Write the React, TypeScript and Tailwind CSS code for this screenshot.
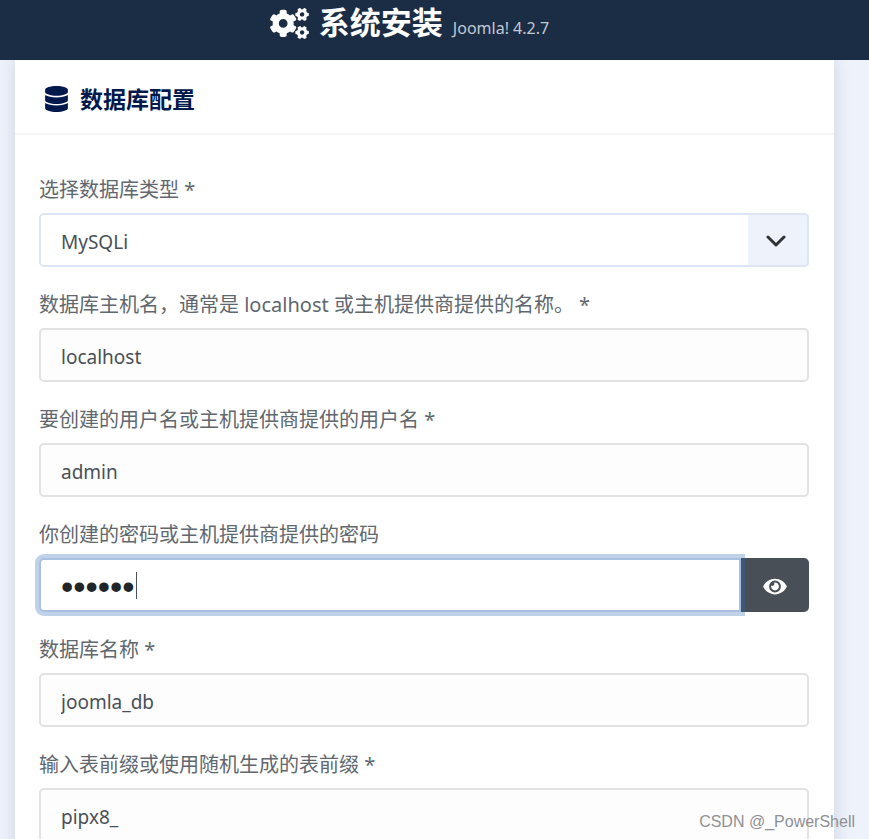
import { useState } from 'react'
import type { InputHTMLAttributes, ReactNode } from 'react'
import { FaCogs, FaDatabase, FaEye, FaEyeSlash } from 'react-icons/fa'

const controlClass =
  'block w-full h-[54px] rounded-[5px] border-2 px-5 pt-1 text-[19px] leading-7 text-[#495057] outline-none'

interface FieldProps {
  id: string
  label: string
  children: ReactNode
}

function Field({ id, label, children }: FieldProps) {
  return (
    <div>
      <label htmlFor={id} className="block mb-2 text-[20px] leading-[30px] text-[#60676e]">
        {label}
      </label>
      {children}
    </div>
  )
}

function TextInput(props: InputHTMLAttributes<HTMLInputElement>) {
  return (
    <input
      type="text"
      className={`${controlClass} border-[#e2e2e2] bg-[#fdfdfd] focus:border-[#a9c0e2]`}
      {...props}
    />
  )
}

export default function App() {
  const [dbType, setDbType] = useState('mysqli')
  const [password, setPassword] = useState('joomla')
  const [showPassword, setShowPassword] = useState(false)

  return (
    <div className="relative h-screen overflow-hidden bg-[#eef2fb] font-['Noto_Sans','Noto_Sans_CJK_SC',sans-serif]">
      <header className="relative z-10 flex h-[60px] justify-center bg-[#1b2c45] pr-[50px] text-white">
        <h1 className="flex h-[50px] items-center gap-[10px] text-[31px] font-bold leading-[50px]">
          <FaCogs className="h-[31px] w-[39px] -mt-1" />
          <span className="flex items-baseline gap-[10px]">
            系统安装
            <small className="text-[16px] font-normal text-[#c3c9d2]">Joomla! 4.2.7</small>
          </span>
        </h1>
      </header>

      <main className="pl-[15px] pr-[35px]">
        <form className="bg-white pb-10 shadow-[0_0_16px_rgba(30,45,80,0.16)]">
          <div className="flex h-[75px] items-center gap-3 border-b-2 border-[#f5f5f5] px-[30px] pt-1 text-[#00194c]">
            <FaDatabase className="h-[26px] w-[23px]" />
            <h2 className="text-[23px] font-bold leading-8">数据库配置</h2>
          </div>

          <div className="flex flex-col gap-[23px] pl-6 pr-[25px] pt-10">
            <Field id="db-type" label="选择数据库类型 *">
              <div className="relative">
                <select
                  id="db-type"
                  value={dbType}
                  onChange={(e) => setDbType(e.target.value)}
                  className={`${controlClass} appearance-none border-[#dbe5f3] bg-white`}
                >
                  <option value="mysqli">MySQLi</option>
                  <option value="mysql">MySQL (PDO)</option>
                  <option value="pgsql">PostgreSQL (PDO)</option>
                </select>
                <span className="pointer-events-none absolute inset-y-0 right-0 flex w-[61px] items-center justify-center rounded-r-[5px] border-2 border-l-0 border-[#dbe5f3] bg-[#eef3fb] pr-1 pt-0.5">
                  <svg viewBox="0 0 20 14" className="h-[14px] w-5" fill="none">
                    <path
                      d="M2 3l8 8 8-8"
                      stroke="#303336"
                      strokeWidth="3"
                      strokeLinecap="round"
                      strokeLinejoin="round"
                    />
                  </svg>
                </span>
              </div>
            </Field>

            <Field id="db-host" label="数据库主机名，通常是 localhost 或主机提供商提供的名称。 *">
              <TextInput id="db-host" defaultValue="localhost" />
            </Field>

            <Field id="db-user" label="要创建的用户名或主机提供商提供的用户名 *">
              <TextInput id="db-user" defaultValue="admin" />
            </Field>

            <Field id="db-pass" label="你创建的密码或主机提供商提供的密码">
              <div className="flex">
                <div className="relative z-10 flex-1">
                  <input
                    id="db-pass"
                    type={showPassword ? 'text' : 'password'}
                    value={password}
                    onChange={(e) => setPassword(e.target.value)}
                    className={`block h-[54px] w-full rounded-l-[5px] border-2 border-[#a9c0e2] bg-white px-5 pt-1 text-[#1f2529] caret-transparent shadow-[0_0_0_4px_rgba(42,105,184,0.3)] outline-none ${
                      showPassword ? 'text-[19px]' : "font-['Liberation_Sans',sans-serif] text-[35px]"
                    }`}
                  />
                  <span className="absolute left-[97px] top-[14px] h-[27px] w-px bg-[#495057]" />
                </div>
                <button
                  type="button"
                  aria-label="显示密码"
                  onClick={() => setShowPassword(!showPassword)}
                  className="flex h-[54px] w-[68px] items-center justify-center rounded-r-[5px] bg-[#484f56] pt-0.5 text-white"
                >
                  {showPassword ? (
                    <FaEyeSlash className="h-[21px] w-6" />
                  ) : (
                    <FaEye className="h-[21px] w-6" />
                  )}
                </button>
              </div>
            </Field>

            <Field id="db-name" label="数据库名称 *">
              <TextInput id="db-name" defaultValue="joomla_db" />
            </Field>

            <Field id="db-prefix" label="输入表前缀或使用随机生成的表前缀 *">
              <TextInput id="db-prefix" defaultValue="pipx8_" />
            </Field>
          </div>
        </form>
      </main>

      <p className="absolute bottom-[7px] right-[14px] z-20 font-['Liberation_Sans',sans-serif] text-[16px] leading-5 text-[#8e9094]">
        CSDN @_PowerShell
      </p>
    </div>
  )
}
